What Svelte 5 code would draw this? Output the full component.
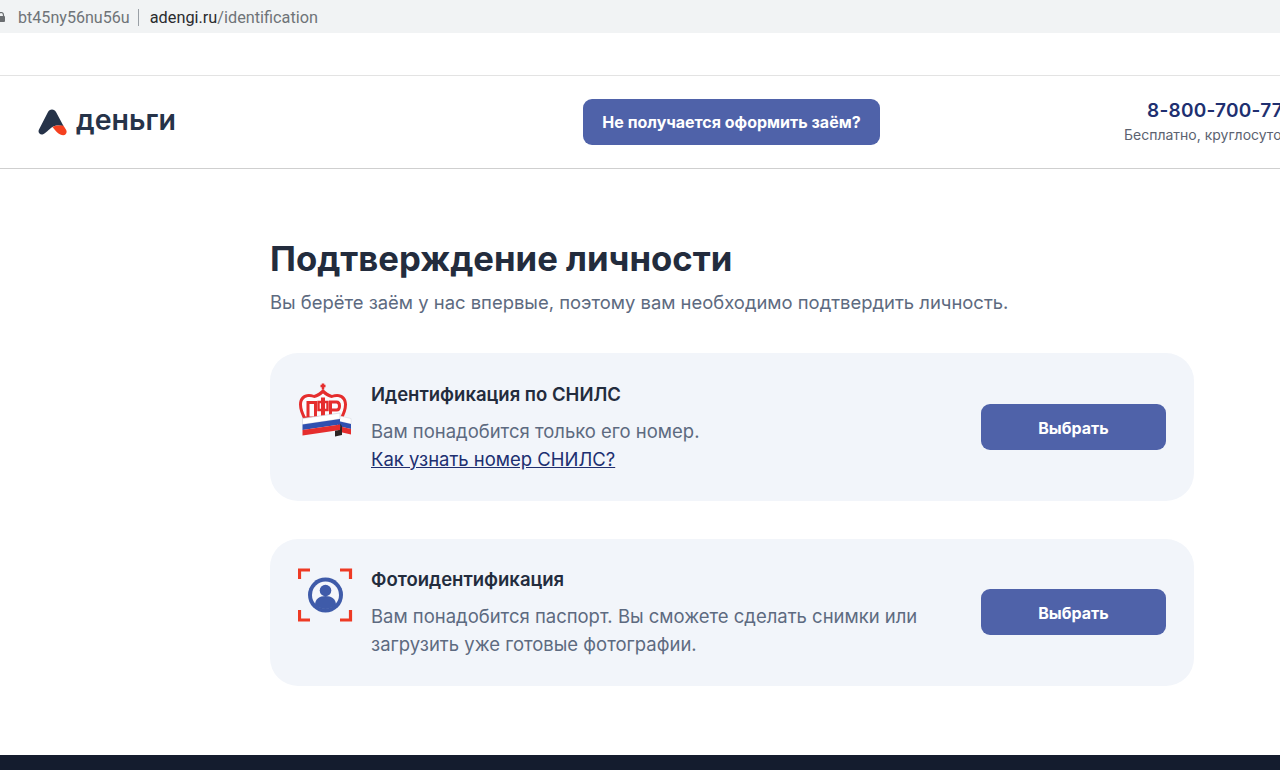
<script>
  const options = [
    {
      title: "Идентификация по СНИЛС",
      icon: "pfr",
      text: "Вам понадобится только его номер.",
      link: "Как узнать номер СНИЛС?"
    },
    {
      title: "Фотоидентификация",
      icon: "photo",
      text: "Вам понадобится паспорт. Вы сможете сделать снимки или загрузить уже готовые фотографии."
    }
  ];
</script>

<div class="page">
  <div class="urlbar">
    <svg class="lock" width="6" height="10" viewBox="0 0 6 10"><rect x="-3" y="4" width="8" height="6" rx="1" fill="#6a6d70" /><path d="M-1.500 4.500V3a2 2 0 0 1 5 0v1.500" fill="none" stroke="#6a6d70" stroke-width="1.200" /></svg>
    <span class="site">bt45ny56nu56u</span>
    <span class="sep"></span>
    <span class="url"><b>adengi.ru</b>/identification</span>
  </div>

  <header>
    <div class="logo">
      <svg width="29" height="27" viewBox="0 0 29 27">
        <path d="M14 .5c-2 0-3.200 1-4 2.500L1 20.500c-1.500 3 .8 5.500 3.500 5 3-.7 6.500-5.500 10-7.500 3.500-2 7-1.500 11-1L18 3c-.8-1.500-2.200-2.500-4-2.500z" fill="#263349" />
        <path d="M25.500 16.800 28.200 21c1.300 2.700-.5 5.300-3 5.300-4 0-7.500-4.300-10.700-8.300 3.500-2 7-1.700 11-1.200z" fill="#f5401f" />
      </svg>
      <span>деньги</span>
    </div>
    <button class="help">Не получается оформить заём?</button>
    <div class="contact">
      <div class="phone">8-800-700-77-77</div>
      <div class="note">Бесплатно, круглосуточно</div>
    </div>
  </header>

  <main>
    <h1>Подтверждение личности</h1>
    <p class="lead">Вы берёте заём у нас впервые, поэтому вам необходимо подтвердить личность.</p>

    {#each options as option}
      <section class="card">
        <div class="icon">
          {#if option.icon === "pfr"}
            <svg width="56" height="56" viewBox="0 0 56 56">
              <path d="M25 1.500v6M22.500 4h5" stroke="#e52d2d" stroke-width="2.500" fill="none" />
              <path d="M25 7c-3 3-6 5-9 6-8-3-15 1-15 9.500 0 5 2 9.500 4 14h40c2-4.500 4-9 4-14C49 14 42 10 34 13c-3-1-6-3-9-6z" fill="#e52d2d" />
              <path d="M25 11.500c-2.500 2-5 3.500-8.500 4.500-7-2.500-12.500 0-12.500 6.500 0 4 1.500 8 3.500 12h35c2-4 3.500-8 3.500-12 0-6.500-5.500-9-12.500-6.500-3.500-1-6-2.500-8.500-4.500z" fill="#fbfbfd" />
              <path d="M10 35V20.500h7.500V35M32.500 35V20h6c4 0 4 8 0 8h-6" fill="none" stroke="#e52d2d" stroke-width="3" />
              <path d="M23 35V15.500h4V35z" fill="#e52d2d" />
              <path d="M20.500 20h9v8h-9z" fill="none" stroke="#e52d2d" stroke-width="2.400" />
              <path d="M40 33.500 53 36.500v5.500L40 39z" fill="#fff" stroke="#d3d6df" stroke-width=".5" />
              <path d="M40 39 53 42v5L40 44z" fill="#2f50b0" />
              <path d="M40 44 53 47v5.500L40 49.500z" fill="#e52d2d" />
              <path d="M4.500 36.500 42 31v6L4.500 42.500z" fill="#fff" stroke="#c6cad6" stroke-width=".6" />
              <path d="M4.500 42.500 42 37v5.500L4.500 48z" fill="#2f50b0" />
              <path d="M4.500 48 42 42.500v5.500L4.500 53.500z" fill="#e52d2d" />
              <path d="M37 48.700 42 48l.5-6.500 1.500 3 0 8.500-7 1.500z" fill="#2b2322" />
            </svg>
          {:else}
            <svg width="56" height="56" viewBox="0 0 56 56">
              <path d="M1.500 11V2h10.500M52.500 11V2H42M1.500 42V52h10.500M52.500 42V52H42" fill="none" stroke="#ee3a24" stroke-width="3.200" />
              <circle cx="27.500" cy="27" r="17.500" fill="#3f5ba9" />
              <circle cx="27.500" cy="27" r="13.500" fill="#f4f6fb" />
              <circle cx="27.500" cy="22.500" r="5.800" fill="#3f5ba9" />
              <path d="M17 37c0-6 4.500-9 10.500-9S38 31 38 37c-2.500 2.300-7 4-10.500 4S19.500 39.300 17 37z" fill="#3f5ba9" />
            </svg>
          {/if}
        </div>
        <div class="body">
          <h2>{option.title}</h2>
          <p>
            {option.text}
            {#if option.link}<br /><a href="#snils">{option.link}</a>{/if}
          </p>
        </div>
        <button class="choose">Выбрать</button>
      </section>
    {/each}
  </main>

  <footer></footer>
</div>

<style>
  :global(body) {
    margin: 0;
    background: #fff;
    font-family: Inter, "Noto Sans", sans-serif;
  }

  .page {
    width: 1280px;
    height: 770px;
    overflow: hidden;
    display: flex;
    flex-direction: column;
  }

  .urlbar {
    height: 33px;
    flex: none;
    background: #f1f3f4;
    display: flex;
    align-items: center;
    font-family: Roboto, sans-serif;
    color: #6f7478;
    box-sizing: border-box;
    padding-top: 1px;
  }
  .lock {
    margin-right: 12px;
    flex: none;
  }
  .site {
    font-size: 16.100px;
  }
  .sep {
    width: 1px;
    height: 17px;
    background: #9aa0a6;
    margin: 0 11px 0 8px;
  }
  .url {
    font-size: 16.300px;
  }
  .url b {
    font-weight: 400;
    color: #2a2b2e;
  }

  header {
    margin-top: 42px;
    height: 94px;
    flex: none;
    box-sizing: border-box;
    width: 1440px;
    border-top: 1px solid #e3e3e3;
    border-bottom: 1px solid #cfcfcf;
    display: flex;
    align-items: center;
    padding-left: 38px;
  }

  .logo {
    display: flex;
    align-items: center;
    gap: 9px;
    width: 545px;
    font-size: 28.500px;
    font-weight: 600;
    color: #263349;
    font-family: Inter, sans-serif;
  }
  .logo span {
    line-height: 30px;
    position: relative;
    top: -2px;
  }

  .help {
    width: 297px;
    height: 46px;
    border: 0;
    border-radius: 9px;
    background: #4f62a9;
    color: #fff;
    font: 700 16px Inter, sans-serif;
    padding: 0;
  }

  .contact {
    margin-left: 244px;
    margin-top: -1px;
    white-space: nowrap;
  }
  .phone {
    margin-left: 23px;
    font-size: 19px;
    font-weight: 600;
    color: #202f70;
    letter-spacing: 0.25px;
    line-height: 24px;
  }
  .note {
    font-size: 14px;
    color: #5b6270;
    line-height: 20px;
    margin-top: 2px;
  }

  main {
    flex: 1;
    width: 924px;
    margin-left: 270px;
  }

  h1 {
    margin: 65px 0 0;
    font-size: 34.700px;
    line-height: 48px;
    font-weight: 700;
    color: #232c3d;
  }
  .lead {
    margin: 7px 0 37px;
    font-size: 18.430px;
    line-height: 27px;
    color: #5d6a80;
  }

  .card {
    box-sizing: border-box;
    display: flex;
    align-items: center;
    height: 147.500px;
    margin-bottom: 38px;
    padding: 0 28px;
    border-radius: 28px;
    background: #f2f5fa;
  }
  .icon {
    align-self: flex-start;
    width: 73px;
    margin-top: 29px;
    flex: none;
  }
  .body {
    flex: 1;
    min-width: 0;
    padding-top: 1px;
  }
  h2 {
    margin: 0 0 11px;
    font-size: 18.500px;
    line-height: 24px;
    font-weight: 600;
    color: #232c3d;
  }
  .body p {
    margin: 0;
    max-width: 560px;
    font-size: 18.480px;
    line-height: 28px;
    color: #5d6a80;
  }
  .body a {
    color: #202f70;
  }
  .choose {
    flex: none;
    width: 185px;
    height: 46px;
    border: 0;
    border-radius: 9px;
    background: #4f62a9;
    color: #fff;
    font: 700 16px Inter, sans-serif;
    padding: 2px 0 0;
  }

  footer {
    height: 15px;
    flex: none;
    background: #141c2e;
  }
</style>
